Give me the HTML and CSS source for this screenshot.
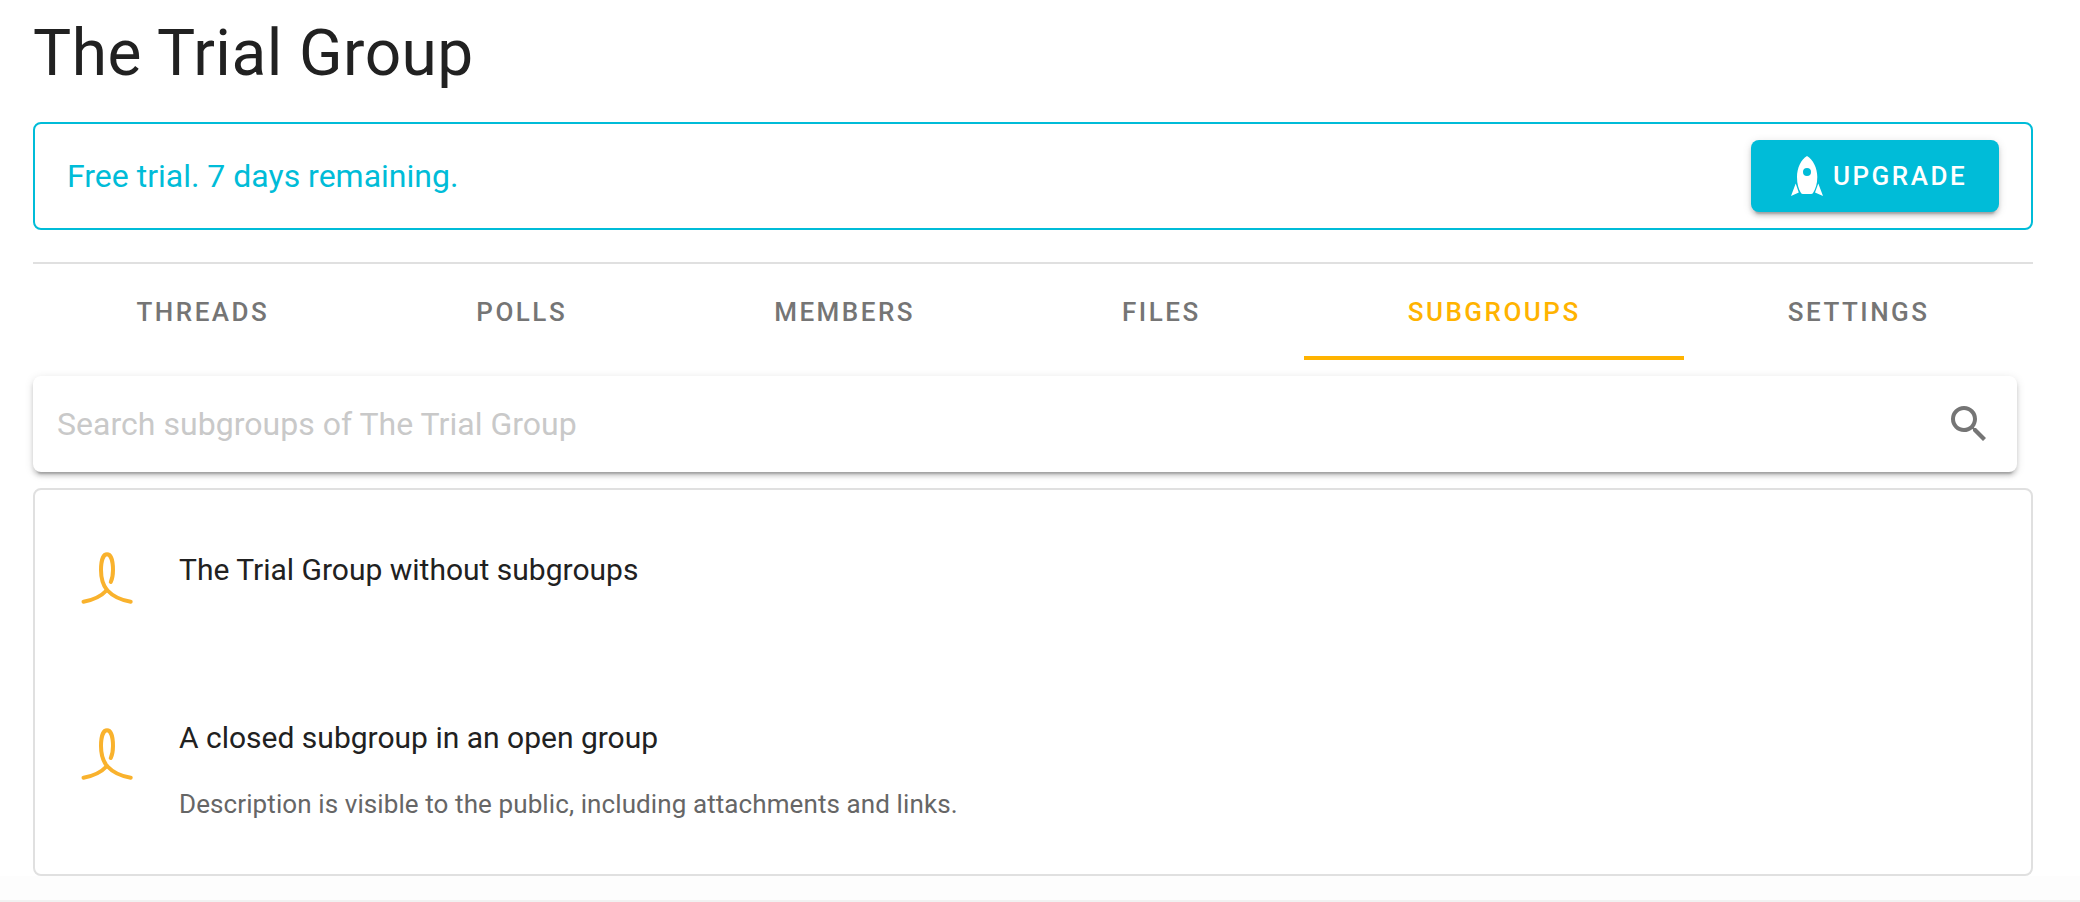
FILE: index.html
```html
<!DOCTYPE html>
<html lang="en">
<head>
<meta charset="utf-8">
<title>The Trial Group</title>
<link rel="stylesheet" href="styles.css">
</head>
<body>
<main class="page">
  <h1 class="title">The Trial Group</h1>
  <div class="alert">
    <span class="alert-text">Free trial. 7 days remaining.</span>
    <button class="upgrade" type="button">
      <svg class="rocket" viewBox="0 0 32 40"><path fill="#fff" fill-rule="evenodd" d="M16 0C22 3.500 26.300 12 26.300 21C26.300 28 24.500 33 22.300 36.500Q21.500 38 20 38H12Q10.500 38 9.700 36.500C7.500 33 6 28 6 21C6 12 10 3.500 16 0ZM16 12A4 4 0 1 0 16 20A4 4 0 1 0 16 12ZM4.700 27.500L7.800 36.500L0 40ZM27.300 27.500L32 40L24 36.500Z"/></svg>
      <span>UPGRADE</span>
    </button>
  </div>
  <nav class="tabs">
    <a class="tab">THREADS</a>
    <a class="tab">POLLS</a>
    <a class="tab">MEMBERS</a>
    <a class="tab">FILES</a>
    <a class="tab active">SUBGROUPS</a>
    <a class="tab">SETTINGS</a>
  </nav>
  <div class="search">
    <input class="search-input" type="text" placeholder="Search subgroups of The Trial Group">
    <svg class="search-icon" viewBox="0 0 24 24"><path fill="#757575" d="M9.500 3A6.500 6.500 0 0 1 16 9.500C16 11.110 15.410 12.590 14.440 13.730L14.710 14H15.500L20.500 19L19 20.500L14 15.500V14.710L13.730 14.440C12.590 15.410 11.110 16 9.500 16A6.500 6.500 0 0 1 9.500 3M9.500 5C7 5 5 7 5 9.500C5 12 7 14 9.500 14C12 14 14 12 14 9.500C14 7 12 5 9.500 5Z"/></svg>
  </div>
  <section class="list">
    <article class="item">
      <svg class="avatar" viewBox="0 0 56 56"><path class="loop" d="M4.500 51.700C13.500 50.200 22 46.500 28 40"/><path class="loop" d="M51.700 51.700C42 50.200 34 46.500 28 40C23.500 34.500 22 28 22 20C22 10 24.500 4.300 28 4.300C31.500 4.300 34 10 34 20C34 25.500 33.200 29 31.800 32"/></svg>
      <div class="item-body"><div class="item-title">The Trial Group without subgroups</div></div>
    </article>
    <article class="item second">
      <svg class="avatar" viewBox="0 0 56 56"><path class="loop" d="M4.500 51.700C13.500 50.200 22 46.500 28 40"/><path class="loop" d="M51.700 51.700C42 50.200 34 46.500 28 40C23.500 34.500 22 28 22 20C22 10 24.500 4.300 28 4.300C31.500 4.300 34 10 34 20C34 25.500 33.200 29 31.800 32"/></svg>
      <div class="item-body">
        <div class="item-title">A closed subgroup in an open group</div>
        <div class="item-desc">Description is visible to the public, including attachments and links.</div>
      </div>
    </article>
  </section>
</main>
<footer class="footer"></footer>
</body>
</html>
```
FILE: styles.css
```css
* { box-sizing: border-box; }
body {
  margin: 0;
  height: 902px;
  overflow: hidden;
  display: flex;
  flex-direction: column;
  background: #fff;
  color: #212121;
  font-family: Roboto, sans-serif;
}
.page { flex: none; width: 2000px; margin-left: 33px; }
.title {
  margin: 0;
  height: 122px;
  padding-top: 22px;
  font-size: 64px;
  line-height: 64px;
  font-weight: 400;
  letter-spacing: .0073529412em;
}
.alert {
  display: flex;
  align-items: center;
  justify-content: space-between;
  height: 108px;
  padding: 0 32px;
  border: 2px solid #00bcd8;
  border-radius: 8px;
  color: #00bcd8;
}
.alert-text { font-size: 32px; line-height: 48px; }
.upgrade {
  display: flex;
  align-items: center;
  width: 248px;
  height: 72px;
  padding: 0 0 0 40px;
  gap: 10px;
  border: 0;
  border-radius: 8px;
  background: #00bcd8;
  color: #fff;
  font: 500 26px/72px Roboto, sans-serif;
  letter-spacing: 2.5px;
  box-shadow: 0 6px 2px -4px rgba(0,0,0,.2), 0 4px 4px rgba(0,0,0,.14), 0 2px 10px rgba(0,0,0,.12);
}
.rocket { width: 32px; height: 40px; }
.tabs {
  display: flex;
  height: 98px;
  margin-top: 32px;
  border-top: 2px solid #e0e0e0;
}
.tab {
  flex: 1 1 auto;
  padding: 4px 0 0;
  border-bottom: 4px solid transparent;
  text-align: center;
  font-size: 26px;
  line-height: 88px;
  font-weight: 500;
  letter-spacing: 2.5px;
  color: #757575;
}
.tab.active { color: #ffb300; border-color: #ffb300; }
.search {
  display: flex;
  align-items: center;
  justify-content: space-between;
  width: 1984px;
  height: 96px;
  margin: 16px 0;
  padding: 0 24px;
  border-radius: 8px;
  background: #fff;
  box-shadow: 0 6px 2px -4px rgba(0,0,0,.2), 0 4px 4px rgba(0,0,0,.14), 0 2px 10px rgba(0,0,0,.12);
}
.search-input {
  flex: 1;
  padding: 0;
  border: 0;
  outline: 0;
  background: none;
  font: 32px/40px Roboto, sans-serif;
  letter-spacing: .03px;
}
.search-input::placeholder { color: #c9c9c9; opacity: 1; }
.search-icon { width: 48px; height: 48px; }
.list {
  height: 388px;
  padding-top: 54px;
  border: 2px solid #e0e0e0;
  border-radius: 8px;
  background: #fff;
}
.item { display: flex; height: 176px; padding-left: 44px; }
.avatar { flex: none; width: 56px; height: 56px; margin-top: 6px; }
.loop { fill: none; stroke: #f9b22d; stroke-width: 4; stroke-linecap: round; }
.item-body { margin-left: 44px; padding-top: 2px; }
.item-title { font-size: 30px; line-height: 48px; }
.item-desc { margin-top: 22px; font-size: 26px; line-height: 40px; letter-spacing: .095px; color: #666; }
.second .item-title { margin-top: -8px; }
.footer {
  flex: 1;
  border-bottom: 2px solid #f1f1f1;
  background: #fdfdfd;
}
```
